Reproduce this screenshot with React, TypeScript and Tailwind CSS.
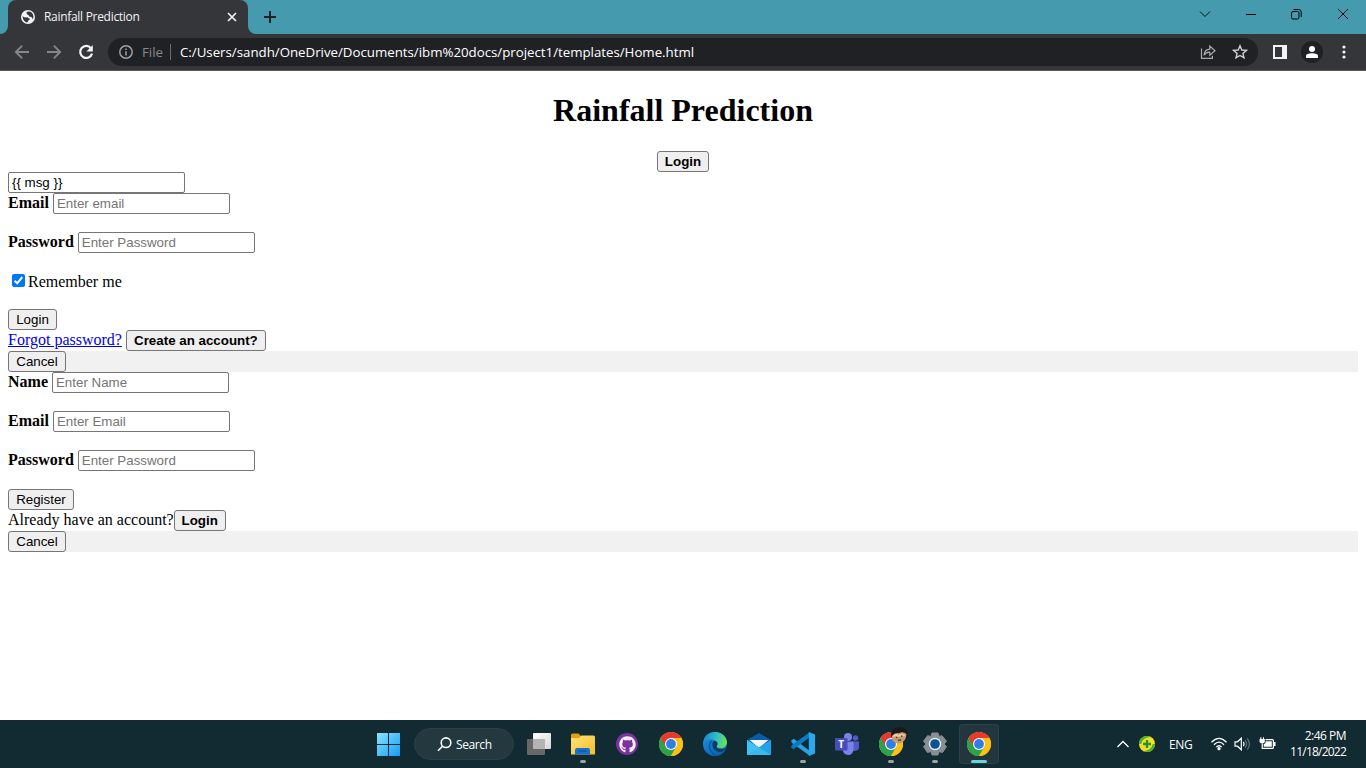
import React from "react";
import { FaGithub } from "react-icons/fa";

type Kids = { children: React.ReactNode };

function Btn({ children, className = "" }: Kids & { className?: string }) {
  return (
    <button className={`h-[21px] shrink-0 rounded-[3px] border border-[#767676] bg-[#efefef] text-center font-['Liberation_Sans',sans-serif] text-[13.333px] leading-[19px] whitespace-nowrap text-black ${className}`}>
      {children}
    </button>
  );
}

function Field({ placeholder, value }: { placeholder?: string; value?: string }) {
  return (
    <input
      placeholder={placeholder}
      defaultValue={value}
      className="h-[21px] w-[177px] shrink-0 rounded-[2px] border border-[#767676] bg-white px-[3px] font-['Liberation_Sans',sans-serif] text-[13.333px] leading-[15px] text-black placeholder:text-[#757575]"
    />
  );
}

function Row({ label, placeholder }: { label: string; placeholder: string }) {
  return (
    <div className="flex h-[21px] gap-1">
      <label className="h-[21px] font-bold leading-[20px]">{label}</label>
      <Field placeholder={placeholder} />
    </div>
  );
}

function Chrome() {
  return (
    <svg width="24" height="24" viewBox="0 0 24 24">
      <circle cx="12" cy="12" r="12" fill="#fbc116" />
      <path d="M12 12 L1.6 6 A12 12 0 0 0 12 24 L17.2 15Z" fill="#2ba24c" />
      <path d="M1.6 6 A12 12 0 0 1 22.4 6 H12 L6.8 15Z" fill="#e33b2e" />
      <path d="M12 6 H22.4 A12 12 0 0 1 12 24 L17.2 15Z" fill="#fbc116" />
      <circle cx="12" cy="12" r="6" fill="#fff" />
      <circle cx="12" cy="12" r="4.9" fill="#2f7de9" />
    </svg>
  );
}

function Task({ children, run = false, active = false }: Kids & { run?: boolean; active?: boolean }) {
  return (
    <div className="flex h-12 w-11 shrink-0 items-center justify-center">
      <div className={`relative flex h-10 w-10 items-center justify-center rounded ${active ? "bg-[#24363d] ring-1 ring-inset ring-[#2d4047]" : ""}`}>
        {children}
        {run && <span className="absolute bottom-[1px] left-[17px] h-[3px] w-[6px] rounded-full bg-[#9aa3a6]" />}
        {active && <span className="absolute bottom-[1px] left-[12px] h-[3px] w-[16px] rounded-full bg-[#68d3da]" />}
      </div>
    </div>
  );
}

function TitleBar() {
  return (
    <div className="flex h-[34px] shrink-0 bg-[#459bad]">
      <svg className="mt-[26px] shrink-0" width="8" height="8" viewBox="0 0 8 8"><path d="M8 0V8H0A8 8 0 0 0 8 0" fill="#35363a" /></svg>
      <div className="flex h-[34px] w-[240px] items-center rounded-t-[8px] bg-[#35363a] pl-[13px] pr-[10px] text-[#f1f3f4]">
        <svg width="14" height="14" viewBox="0 0 14 14">
          <circle cx="7" cy="7" r="7" fill="#f1f3f4" />
          <path d="M1.5 6.2 Q4 8.2 6.7 7.3 Q7.3 8.8 9 8.6 Q8.6 10.3 7.5 10.2 Q7.2 12 6 12.4 Q2.1 11.4 1.5 6.2Z M6.1 1.7 Q10 .5 12.1 4.7 Q12.8 7 12 9 Q10.9 8.4 10.6 7.1 Q9 7.2 8 6.3 Q8.4 5.2 6.7 5.1 Q6.9 4 5.8 3.9 Q5 2.8 6.1 1.7Z" fill="#35363a" />
        </svg>
        <span className="ml-[9px] text-[12px] leading-4 tracking-[-0.3px] whitespace-nowrap">Rainfall Prediction</span>
        <svg className="ml-auto" width="12" height="12" viewBox="0 0 12 12" stroke="#f1f3f4" strokeWidth="1.7"><path d="M2 2 10 10M10 2 2 10" /></svg>
      </div>
      <svg className="mt-[26px] shrink-0" width="8" height="8" viewBox="0 0 8 8"><path d="M0 0V8H8A8 8 0 0 1 0 0" fill="#35363a" /></svg>
      <svg className="ml-[8px] mt-[11px]" width="12" height="12" viewBox="0 0 12 12" stroke="#202124" strokeWidth="2"><path d="M6 0V12M0 6H12" /></svg>
      <div className="ml-auto flex h-[28px] items-center pr-[17px]">
        <svg className="mr-[35px]" width="12" height="12" viewBox="0 0 12 12" fill="none" stroke="#111"><path d="M1 3.5 6 8.5 11 3.5" /></svg>
        <svg className="mr-[35px]" width="10" height="12" viewBox="0 0 10 12" stroke="#000"><path d="M0 6.5H10" /></svg>
        <svg className="mr-[35px]" width="11" height="12" viewBox="0 0 11 12" fill="none" stroke="#000"><rect x=".5" y="3.5" width="7.5" height="7.5" rx="1.5" /><path d="M2.5 1.5H7.5Q10.2 1.5 10.2 4V9" /></svg>
        <svg width="12" height="12" viewBox="0 0 12 12" stroke="#000"><path d="M1 1 11 11M11 1 1 11" /></svg>
      </div>
    </div>
  );
}

function Toolbar() {
  return (
    <div className="flex h-[37px] shrink-0 items-center border-b border-[#5b565d] bg-[#35363a]">
      <svg className="ml-[14px]" width="16" height="16" viewBox="0 0 16 16" fill="none" stroke="#85868a" strokeWidth="1.8"><path d="M15 8H2M8.2 1.7 1.8 8 8.2 14.3" /></svg>
      <svg className="ml-[16px]" width="16" height="16" viewBox="0 0 16 16" fill="none" stroke="#85868a" strokeWidth="1.8"><path d="M1 8H14M7.8 1.7 14.2 8 7.8 14.3" /></svg>
      <svg className="ml-[16px]" width="16" height="16" viewBox="0 0 16 16"><path d="M13 4.3A6 6 0 1 0 14 9.6" fill="none" stroke="#f1f3f4" strokeWidth="2.2" /><path d="M14.8 1V7.4H8.4Z" fill="#f1f3f4" /></svg>
      <div className="ml-[14px] flex h-7 w-[1150px] items-center rounded-full bg-[#202124] pl-[11px] pr-[10px]">
        <svg width="14" height="14" viewBox="0 0 14 14" fill="none" stroke="#9aa0a6" strokeWidth="1.5"><circle cx="7" cy="7" r="6.2" /><path d="M7 6.2V10.5M7 3.4V5" /></svg>
        <span className="ml-[9px] w-[28px] text-[13.3px] leading-5 text-[#85888c]">File</span>
        <span className="h-4 w-px bg-[#6b6d71]" />
        <span className="ml-[9px] text-[13.3px] leading-5 tracking-[-0.02px] whitespace-nowrap text-white">C:/Users/sandh/OneDrive/Documents/ibm%20docs/project1/templates/Home.html</span>
        <svg className="ml-auto" width="16" height="16" viewBox="0 0 16 16" fill="none" stroke="#a8aaad" strokeWidth="1.2"><path d="M1.5 4.5V14.4H12.4V11.7M4 11.3Q4.6 5.2 9.8 5.1V2L15 6.8 9.8 11.2V8.2Q6 8.1 4 11.3Z" /></svg>
        <svg className="ml-[16px]" width="16" height="16" viewBox="0 0 16 16" fill="none" stroke="#d0d1d3" strokeWidth="1.4"><path d="M8 1.8 9.8 6 14.5 6.4 10.9 9.4 12 13.9 8 11.5 4 13.9 5.1 9.4 1.5 6.4 6.2 6Z" /></svg>
      </div>
      <svg className="ml-[15px]" width="14" height="14" viewBox="0 0 14 14"><path fillRule="evenodd" fill="#f1f3f4" d="M0 0H14V14H0ZM2 2V12H9V2Z" /></svg>
      <span className="ml-[14px] flex h-[22px] w-[22px] items-center justify-center rounded-full bg-[#202124]">
        <svg width="12" height="12" viewBox="0 0 12 12" fill="#fff"><circle cx="6" cy="3" r="3" /><path d="M0 12V10Q0 7.3 6 7.3T12 10V12Z" /></svg>
      </span>
      <svg className="ml-[19px]" width="4" height="14" viewBox="0 0 4 14" fill="#f1f3f4"><circle cx="2" cy="2" r="1.6" /><circle cx="2" cy="7" r="1.6" /><circle cx="2" cy="12" r="1.6" /></svg>
    </div>
  );
}

function Page() {
  return (
    <main className="flex min-h-0 grow flex-col bg-white px-2 font-['Liberation_Serif',serif] text-[16px] text-black">
      <h1 className="mt-[21px] text-center text-[32px] font-bold leading-[37px]">Rainfall Prediction</h1>
      <div className="mt-[22px] flex justify-center"><Btn className="w-[52px] font-bold">Login</Btn></div>
      <Field value="{{ msg }}" />
      <Row label="Email" placeholder="Enter email" />
      <div className="mt-[18px]"><Row label="Password" placeholder="Enter Password" /></div>
      <label className="mt-[20px] flex h-[18px] pl-1 leading-[18px]">
        <svg className="mr-[3px] mt-[1px]" width="13" height="13" viewBox="0 0 13 13"><rect width="13" height="13" rx="2" fill="#0075ff" /><path d="M2.6 6.8 5.2 9.3 10.3 3" fill="none" stroke="#fff" strokeWidth="2" /></svg>
        Remember me
      </label>
      <div className="mt-[18px] flex"><Btn className="w-[49px]">Login</Btn></div>
      <div className="flex h-[21px] gap-1"><a className="leading-[20px] text-[#0000ee] underline">Forgot password?</a><Btn className="w-[140px] font-bold">Create an account?</Btn></div>
      <div className="flex h-[21px] bg-[#f1f1f1]"><Btn className="w-[58px]">Cancel</Btn></div>
      <Row label="Name" placeholder="Enter Name" />
      <div className="mt-[18px]"><Row label="Email" placeholder="Enter Email" /></div>
      <div className="mt-[18px]"><Row label="Password" placeholder="Enter Password" /></div>
      <div className="mt-[18px] flex"><Btn className="w-[66px]">Register</Btn></div>
      <div className="flex h-[21px]"><span className="leading-[20px]">Already have an account?</span><Btn className="w-[52px] font-bold">Login</Btn></div>
      <div className="flex h-[21px] bg-[#f1f1f1]"><Btn className="w-[58px]">Cancel</Btn></div>
    </main>
  );
}

function Taskbar() {
  return (
    <footer className="flex h-12 shrink-0 items-center bg-[#122a31] pl-[366px] text-white">
      <Task>
        <svg width="24" height="24" viewBox="0 0 24 24">
          <defs><linearGradient id="win" x1="0" y1="0" x2="1" y2="1"><stop stopColor="#8be2ff" /><stop offset="1" stopColor="#129cf5" /></linearGradient></defs>
          <path fill="url(#win)" d="M1 1H12V12H1ZM13 1H24V12H13ZM1 13H12V24H1ZM13 13H24V24H13Z" />
        </svg>
      </Task>
      <div className="ml-1 flex h-8 w-[100px] items-center rounded-full border border-[#293f45] bg-[#23383f] pl-[22px]">
        <svg width="15" height="15" viewBox="0 0 15 15" fill="none" stroke="#fff" strokeWidth="1.6"><circle cx="9" cy="5.7" r="4.8" /><path d="M5.5 9.2 1 13.8" /></svg>
        <span className="ml-[4px] pt-[2px] text-[12px] font-medium leading-4 tracking-[-0.4px]">Search</span>
      </div>
      <div className="w-[3px]" />
      <Task>
        <svg width="24" height="24" viewBox="0 0 24 24">
          <defs><linearGradient id="tv" x1="0" y1="0" x2="1" y2="1"><stop stopColor="#fff" /><stop offset="1" stopColor="#d7d7d7" /></linearGradient></defs>
          <rect x="6" y="1" width="18" height="16" rx="1" fill="url(#tv)" /><rect y="7" width="18" height="16" rx="1" fill="#686868" /><path d="M6 7H18V17H6Z" fill="#b4b4b4" />
        </svg>
      </Task>
      <Task run>
        <svg width="24" height="24" viewBox="0 0 24 24">
          <defs><linearGradient id="fold" x1="0" y1="0" x2="1" y2="1"><stop stopColor="#ffe27a" /><stop offset="1" stopColor="#f6bd27" /></linearGradient></defs>
          <path d="M0 3Q0 1.5 1.5 1.5H7.5L10 4H12V9H0Z" fill="#e1a00c" /><path d="M0 6H8L10.5 3.5H22.5Q24 3.5 24 5V22.5H0Z" fill="url(#fold)" /><path d="M4 22.5V18Q4 16 6 16H17Q19 16 19 18V22.5Z" fill="#1672ce" /><path d="M7.5 19H15.5" stroke="#104f9b" strokeWidth="1.2" />
        </svg>
      </Task>
      <Task>
        <span className="flex h-[22px] w-[22px] items-center justify-center rounded-full bg-[#7b32a1]">
          <FaGithub size={17} color="#f5eef8" />
        </span>
      </Task>
      <Task><Chrome /></Task>
      <Task>
        <svg width="24" height="24" viewBox="0 0 24 24">
          <defs>
            <linearGradient id="edge" x1="0" y1=".3" x2="1" y2=".5"><stop stopColor="#1685d4" /><stop offset=".55" stopColor="#32bfc4" /><stop offset="1" stopColor="#6be453" /></linearGradient>
            <linearGradient id="edgeb" x1="0" y1="0" x2="1" y2="1"><stop stopColor="#1896df" /><stop offset="1" stopColor="#0759a9" /></linearGradient>
          </defs>
          <circle cx="12" cy="12" r="12" fill="url(#edgeb)" />
          <path d="M.1 11Q1.3.2 12 0C20 0 24 6 24 10.5 23.8 14.3 20.5 16.5 17 16.3 14 16.3 13.3 15 13.8 14.1Q15.7 11 13 9.2C8.5 5.6 1.6 7.6.1 11Z" fill="url(#edge)" />
          <path d="M10.8 9Q14.7 8.5 14.5 12.5 12.8 14 14 15.4 16.6 18 22.6 16.4 20 20 16 20 9 18.5 9.4 12Q9.6 10 10.8 9Z" fill="#123b65" />
          <path d="M8.5 9Q5 13 7.3 18 9.2 22 14 23.7" stroke="#0a56a5" strokeWidth="1.5" fill="none" />
          <path d="M22.4 18.2 24 15V20Z" fill="#122a31" />
        </svg>
      </Task>
      <Task>
        <svg width="24" height="24" viewBox="0 0 24 24"><path d="M0 8 12 1 24 8V14H0Z" fill="#075ca8" /><path d="M2.5 8H21.5L12 16Z" fill="#f3f5f7" /><path d="M0 8 12 15.5 24 8V23H0Z" fill="#30b7ef" /><path d="M0 23 14 14.2 24 8V23Z" fill="#23a2e6" /><path d="M0 8 24 23H0Z" fill="#48c6f2" opacity=".65" /></svg>
      </Task>
      <Task run>
        <svg width="24" height="24" viewBox="0 0 24 24"><path d="M0 8.7 2.7 6.7 19 19V24L1 11Z" fill="#2b9fe0" /><path d="M0 15.3 2.7 17.3 19 5V0L1 13Z" fill="#087bc4" /><path d="M17.8 0 24 2.5V21.5L17.8 24Z" fill="#29a9ed" /></svg>
      </Task>
      <Task>
        <svg width="24" height="24" viewBox="0 0 24 24">
          <circle cx="13" cy="5" r="4" fill="#7b83eb" /><circle cx="20.5" cy="6" r="2.7" fill="#5059c9" /><path d="M16 9.5H24V15Q24 19 19 19H16Z" fill="#5059c9" /><path d="M8 9.5H18.5V17Q18 23 13 23 8.5 22.5 7.5 18Z" fill="#7b83eb" /><rect y="6" width="12.5" height="12.5" rx="1" fill="#454dbb" /><text x="6.2" y="15.7" textAnchor="middle" fill="#fff" fontSize="10" fontWeight="700" fontFamily="Open Sans, sans-serif">T</text>
        </svg>
      </Task>
      <Task run>
        <div className="relative h-6 w-6"><Chrome />
          <svg className="absolute -top-[5px] left-[12px]" width="17" height="17" viewBox="0 0 17 17"><ellipse cx="8.5" cy="7.5" rx="8.5" ry="7.5" fill="#191a19" /><path d="M1 9Q4 5 8 6.2Q12 4 15.5 7Q15 14.8 9 16.3Q2.7 17 1 12Z" fill="#c99a71" /><path d="M2 10Q4.5 6.5 7 9L11 7.5 13.7 9" fill="none" stroke="#edcca5" strokeWidth="2" /><path d="M5.3 10.5H6.4M10 9.2H11.4M7.2 13.3 10 12.8" stroke="#412c21" strokeWidth="1.3" /></svg>
        </div>
      </Task>
      <Task run>
        <svg width="24" height="24" viewBox="0 0 24 24"><path d="M9 1H15L16 4.4 19 3.7 23.5 9.3 21 12 23.5 14.7 19.5 20.5 16 19.6 15 23H9L8 19.6 4.5 20.5.5 14.7 3 12 .5 9.3 4.5 3.7 8 4.4Z" fill="#878e94" strokeLinejoin="round" stroke="#878e94" /><circle cx="12" cy="12" r="6.2" fill="#e8edf0" /><circle cx="12" cy="12" r="4.8" fill="#0b5294" /></svg>
      </Task>
      <Task active><Chrome /></Task>
      <svg className="ml-[116px]" width="12" height="8" viewBox="0 0 12 8" fill="none" stroke="#fff" strokeWidth="1.3"><path d="M.5 7 6 1.5 11.5 7" /></svg>
      <svg className="ml-[10px]" width="16" height="16" viewBox="0 0 16 16"><circle cx="8" cy="8" r="8" fill="#f4df23" /><path d="M0 8A8 8 0 0 1 12 1.1Q4 1 2.1 8ZM16 8A8 8 0 0 1 4 14.9Q12 15 13.9 8Z" fill="#4dad35" /><path d="M8 4V12M4 8H12" stroke="#25913b" strokeWidth="2.4" /></svg>
      <span className="ml-[14px] w-[25px] pt-[2px] text-[12px] font-medium leading-4 tracking-[-0.4px]">ENG</span>
      <svg className="ml-[16px]" width="18" height="14" viewBox="0 0 18 14" fill="none" stroke="#fff" strokeWidth="1.3"><path d="M1.5 5.2Q9-2.3 16.5 5.2M4 7.7Q9 2.7 14 7.7M6.3 10.1Q9 7.5 11.7 10.1" /><circle cx="9" cy="11.7" r="1" fill="#fff" /></svg>
      <svg className="ml-[6px]" width="17" height="14" viewBox="0 0 17 14" fill="none" stroke="#fff" strokeWidth="1.2"><path d="M1 4.8H3.5L7.3 1.2V12.8L3.5 9.2H1ZM9.3 4.8Q10.8 7 9.3 9.2" /><path d="M11.2 3Q14 7 11.2 11M13.3 1.3Q17.5 7 13.3 12.7" stroke="#607379" /></svg>
      <svg className="ml-[8px]" width="17" height="14" viewBox="0 0 17 14"><path d="M6.5 2.6H13.4Q14.4 2.6 14.4 3.6V10.4Q14.4 11.4 13.4 11.4H3.2V6.5" fill="none" stroke="#fff" strokeWidth="1.2" /><path d="M6.5 4.3H12.8V9.8H4.7V7.3L6.5 6ZM15 5H16.5V9H15Z" fill="#fff" /><path d="M.5 2H5.8V4.5Q5.8 6.5 3.2 6.5T.5 4.5Z" fill="#fff" /><path d="M1.8 .3V3M4.5 .3V3" stroke="#fff" strokeWidth="1.1" /></svg>
      <div className="ml-auto mr-5 text-right text-[12px] font-medium leading-4"><div className="tracking-[-0.5px]">2:46 PM</div><div className="tracking-[-0.78px]">11/18/2022</div></div>
    </footer>
  );
}

export default function App() {
  return (
    <div className="flex h-[768px] w-[1366px] flex-col overflow-hidden font-['Open_Sans',sans-serif]">
      <TitleBar />
      <Toolbar />
      <Page />
      <Taskbar />
    </div>
  );
}
